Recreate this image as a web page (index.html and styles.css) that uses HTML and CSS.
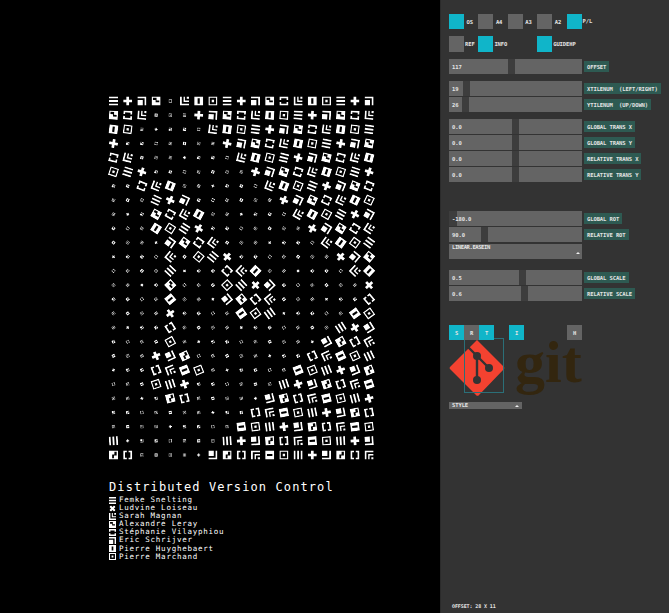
FILE: index.html
```html
<!DOCTYPE html>
<html lang="en">
<head>
    <meta charset="UTF-8">
    <title>Distributed Version Control</title>
    <link rel="stylesheet" href="styles.css">
</head>
<body>
    <svg class="defs" width="0" height="0">
        <defs>
            <symbol id="g0" viewBox="0 0 10 10"><path d="M0 0h10v2H0zM0 4h10v2H0zM0 8h10v2H0z"/></symbol>
            <symbol id="g1" viewBox="0 0 10 10"><path d="M3.5 0h3v3.5H10v3H6.5V10h-3V6.5H0v-3h3.5z"/></symbol>
            <symbol id="g2" viewBox="0 0 10 10"><path d="M0 0h10v10H8V2H0zM0 4h6v6H0z"/></symbol>
            <symbol id="g3" viewBox="0 0 10 10"><path fill-rule="evenodd" d="M0 0h10v10H0zM1.5 1.5v2.5h3v2.5h4V4.5h-3v-3z"/></symbol>
            <symbol id="g4" viewBox="0 0 10 10"><path d="M0 0h10v4H8V2H2v2H0zM0 6h2v2h6V6h2v4H0z"/></symbol>
            <symbol id="g5" viewBox="0 0 10 10"><path d="M0 0h2v8h8v2H0zM4 0h1.5v4.5H10V6H4zM7.5 0H10v2.5H7.5z"/></symbol>
            <symbol id="g6" viewBox="0 0 10 10"><path fill-rule="evenodd" d="M0 0h10v10H0zM3.8 2v6h2.4V2z"/></symbol>
            <symbol id="g7" viewBox="0 0 10 10"><path fill-rule="evenodd" d="M0 0h10v10H0zM1.5 1.5v7h7v-7zM3.7 3.7h2.6v2.6H3.7z"/></symbol>
        </defs>
    </svg>

    <div class="poster">
        <svg id="grid" class="grid" width="280" height="375" viewBox="0 0 280 375"></svg>
        <h1 class="title">Distributed Version Control</h1>
        <ul class="credits">
            <li><svg class="mark"><use href="#g0"/></svg>Femke Snelting</li>
            <li><svg class="mark mark-x"><use href="#g1"/></svg>Ludvine Loiseau</li>
            <li><svg class="mark"><use href="#g5"/></svg>Sarah Magnan</li>
            <li><svg class="mark"><use href="#g3"/></svg>Alexandre Leray</li>
            <li><svg class="mark"><use href="#g4"/></svg>Stéphanie Vilayphiou</li>
            <li><svg class="mark"><use href="#g2"/></svg>Eric Schrijver</li>
            <li><svg class="mark"><use href="#g6"/></svg>Pierre Huyghebaert</li>
            <li><svg class="mark"><use href="#g7"/></svg>Pierre Marchand</li>
        </ul>
    </div>

    <div class="panel">
        <div class="toggles">
            <div class="toggle"><span class="box on"></span>OS</div>
            <div class="toggle"><span class="box"></span>A4</div>
            <div class="toggle"><span class="box"></span>A3</div>
            <div class="toggle"><span class="box"></span>A2</div>
            <div class="toggle tight raised"><span class="box on"></span>P/L</div>
        </div>
        <div class="toggles second">
            <div class="toggle tight"><span class="box"></span>REF</div>
            <div class="toggle tight"><span class="box on"></span>INFO</div>
            <div class="toggle tight"></div>
            <div class="toggle tight"><span class="box on"></span>GUIDEHP</div>
        </div>

        <div class="row group"><div class="slider"><span class="fill" style="width:59px">117</span><span class="rest"></span></div><span class="tag">OFFSET</span></div>

        <div class="row group"><div class="slider"><span class="fill" style="width:14px">19</span><span class="rest"></span></div><span class="tag">XTILENUM &nbsp;(LEFT/RIGHT)</span></div>
        <div class="row"><div class="slider"><span class="fill" style="width:13px">26</span><span class="rest"></span></div><span class="tag">YTILENUM &nbsp;(UP/DOWN)</span></div>

        <div class="row group"><div class="slider"><span class="fill" style="width:63px">0.0</span><span class="rest"></span></div><span class="tag">GLOBAL TRANS X</span></div>
        <div class="row"><div class="slider"><span class="fill" style="width:63px">0.0</span><span class="rest"></span></div><span class="tag">GLOBAL TRANS Y</span></div>
        <div class="row"><div class="slider"><span class="fill" style="width:63px">0.0</span><span class="rest"></span></div><span class="tag">RELATIVE TRANS X</span></div>
        <div class="row"><div class="slider"><span class="fill" style="width:63px">0.0</span><span class="rest"></span></div><span class="tag">RELATIVE TRANS Y</span></div>

        <div class="row group-wide"><div class="slider slider-min"><span class="value">-180.0</span><span class="rest"></span></div><span class="tag">GLOBAL ROT</span></div>
        <div class="row"><div class="slider"><span class="fill" style="width:32px">90.0</span><span class="rest"></span></div><span class="tag">RELATIVE ROT</span></div>
        <div class="dropdown">LINEAR.EASEIN<span class="arrow"></span></div>

        <div class="row group-scale"><div class="slider"><span class="fill" style="width:70px">0.5</span><span class="rest"></span></div><span class="tag">GLOBAL SCALE</span></div>
        <div class="row"><div class="slider"><span class="fill" style="width:72px">0.6</span><span class="rest"></span></div><span class="tag">RELATIVE SCALE</span></div>

        <div class="tools">
            <span class="tool on">S</span><span class="tool">R</span><span class="tool on">T</span>
            <span class="tool on tool-i">I</span>
            <span class="tool tool-h">H</span>
        </div>

        <div class="logo">
            <svg class="logo-mark" width="56" height="58" viewBox="0 0 56 58">
                <path class="diamond" d="M28 1L55 28a1.5 1.5 0 0 1 0 2L30 56a2 2 0 0 1-3 0L1 30a1.5 1.5 0 0 1 0-2z"/>
                <path class="branch" d="M18 7L28 17L40 29M28 17V41"/>
                <circle class="node" cx="28" cy="17" r="4"/>
                <circle class="node" cx="40" cy="29" r="4"/>
                <circle class="node" cx="28" cy="41" r="4"/>
                <rect class="frame" x="15.5" y="-0.5" width="39" height="54"/>
            </svg>
            <span class="logo-word">git</span>
        </div>

        <div class="dropdown dropdown-small">STYLE<span class="arrow"></span></div>

        <div class="status">OFFSET: 28 X 11</div>
    </div>

    <script src="script.js"></script>
</body>
</html>
```

FILE: styles.css
```css
body {
    margin: 0;
    width: 669px;
    height: 613px;
    display: flex;
    overflow: hidden;
    background: #000;
    font-family: "DejaVu Sans Mono", monospace;
}
.defs {
    position: absolute;
}
.poster {
    width: 440px;
    flex: none;
    padding-top: 90px;
    box-sizing: border-box;
    color: #fff;
}
.grid {
    display: block;
    margin-left: 100px;
    fill: #fff;
}
.title {
    margin: 15px 0 0 109px;
    font-size: 12px;
    line-height: 14px;
    font-weight: normal;
    letter-spacing: 1.1px;
}
.credits {
    margin: 2px 0 0 109px;
    padding: 0;
    list-style: none;
    font-size: 7.5px;
    line-height: 8.1px;
    letter-spacing: 0.75px;
}
.credits li {
    display: flex;
    align-items: center;
    gap: 3px;
    height: 8.1px;
}
.mark {
    width: 7px;
    height: 7px;
    fill: #fff;
    flex: none;
}
.mark-x {
    transform: rotate(45deg);
}

.panel {
    position: relative;
    width: 229px;
    flex: none;
    padding: 14px 0 0 8px;
    box-sizing: border-box;
    background: #333;
    border-left: 1px solid #2b2b2b;
    display: flex;
    flex-direction: column;
    font-size: 5.5px;
    font-weight: bold;
    letter-spacing: -0.1px;
    color: #e4e4e4;
}
.toggles {
    display: grid;
    grid-template-columns: repeat(5, 29.4px);
    height: 15px;
}
.second {
    margin-top: 7px;
    height: 16px;
}
.toggle {
    display: flex;
    align-items: center;
    gap: 2.5px;
}
.tight {
    gap: 1px;
}
.raised {
    align-items: flex-start;
    line-height: 14px;
}
.box {
    width: 15px;
    height: 100%;
    flex: none;
    background: #646464;
}
.box.on {
    background: #10b5c9;
}

.row {
    display: flex;
    align-items: center;
    gap: 2px;
    height: 15px;
    margin-top: 1px;
}
.group {
    margin-top: 7px;
}
.group-wide {
    margin-top: 29px;
}
.group-scale {
    margin-top: 11px;
}
.slider {
    width: 133px;
    height: 100%;
    flex: none;
    display: flex;
    gap: 7px;
    background: #3d3d3d;
}
.fill {
    display: flex;
    align-items: center;
    padding-left: 3px;
    box-sizing: border-box;
    background: #646464;
}
.rest {
    flex: 1;
    background: #646464;
}
.slider-min {
    position: relative;
    padding-left: 8px;
    box-sizing: border-box;
}
.value {
    position: absolute;
    left: 3px;
    top: 5px;
}
.tag {
    height: 11px;
    padding: 0 3px;
    display: flex;
    align-items: center;
    background: #2e5a52;
    white-space: nowrap;
}
.dropdown {
    position: relative;
    width: 133px;
    height: 15px;
    margin-top: 2px;
    padding-left: 3px;
    box-sizing: border-box;
    background: #646464;
    line-height: 6px;
    letter-spacing: -0.4px;
}
.arrow {
    position: absolute;
    right: 2px;
    bottom: 5px;
    border: 2px solid transparent;
    border-top: 0;
    border-bottom: 2px solid #eee;
}
.dropdown-small {
    width: 73px;
    height: 7px;
    margin-top: 62px;
    line-height: 7px;
    letter-spacing: -0.1px;
}
.dropdown-small .arrow {
    bottom: 2px;
    right: 3px;
}

.tools {
    position: relative;
    z-index: 1;
    display: flex;
    width: 133px;
    height: 15px;
    margin-top: 24px;
}
.tool {
    width: 15px;
    display: flex;
    align-items: center;
    justify-content: center;
    background: #646464;
}
.tool.on {
    background: #10b5c9;
}
.tool-i {
    margin-left: 15px;
}
.tool-h {
    margin-left: auto;
}

.logo {
    position: absolute;
    left: 8px;
    top: 339px;
    width: 133px;
    height: 60px;
}
.logo-mark {
    display: block;
    overflow: visible;
}
.diamond {
    fill: #f44230;
}
.branch {
    fill: none;
    stroke: #333;
    stroke-width: 2.4;
}
.node {
    fill: #333;
}
.frame {
    fill: none;
    stroke: #2b6f78;
    stroke-width: 1;
}
.logo-word {
    position: absolute;
    left: 66px;
    top: -11px;
    font-family: "Liberation Serif", serif;
    font-size: 60px;
    line-height: 69px;
    font-weight: bold;
    letter-spacing: 0;
    color: #33260f;
}
.status {
    margin-top: auto;
    margin-bottom: 4px;
    padding-left: 3px;
    font-size: 5px;
}
```

FILE: script.js
```js
// one string per row, # = full size glyph, . = small one
const rows = [
    '####.##############',
    '###...#############',
    '##.....############',
    '#.......###########',
    '##.......##########',
    '###.......#########',
    '..###......########',
    '...###......#######',
    '...####......######',
    '...####.......#####',
    '....####.......####',
    '....#.###.......###',
    '....#...###......##',
    '....#...####......#',
    '....#...####......#',
    '....#....###.....##',
    '....#...........###',
    '....#..........####',
    '...###........#####',
    '...####......######',
    '...###......#######',
    '....##.....########',
    '..........#########',
    '.........##########',
    '#.......###########',
    '##.....############'
];

const grid = document.getElementById('grid');
const ns = 'http://www.w3.org/2000/svg';

rows.forEach(function(row, r) {
    for (let c = 0; c < row.length; c++) {
        const size = row[c] === '#' ? 9 : 3.4;
        const x = 13.5 + c * 14.2;
        const y = 11 + r * 14.16;

        const use = document.createElementNS(ns, 'use');
        use.setAttribute('href', '#g' + ((c + 3 * r) % 8));
        use.setAttribute('width', size);
        use.setAttribute('height', size);
        use.setAttribute('x', x - size / 2);
        use.setAttribute('y', y - size / 2);
        use.setAttribute('transform', 'rotate(' + r * 3.6 + ' ' + x + ' ' + y + ')');
        grid.appendChild(use);
    }
});
```
